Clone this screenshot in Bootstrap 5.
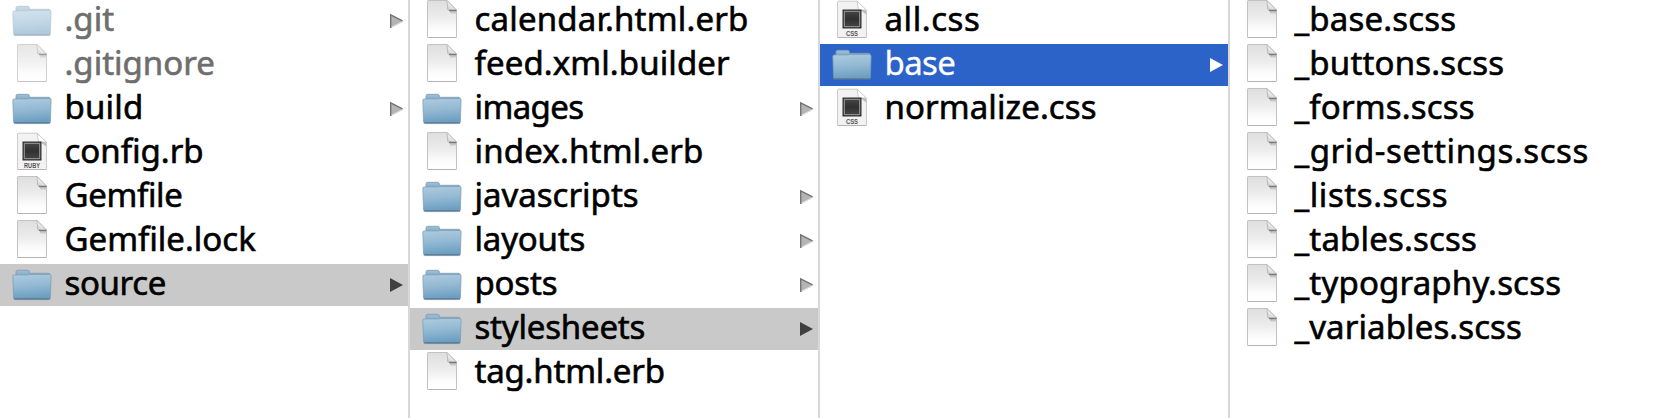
<!DOCTYPE html>
<html lang="en">
<head>
<meta charset="utf-8">
<title>Files</title>
<link href="https://cdn.jsdelivr.net/npm/bootstrap@5.3.0/dist/css/bootstrap.min.css" rel="stylesheet">
<style>
body{background:#fff;color:#000;font-family:"Noto Sans","Open Sans",sans-serif;font-size:33px;overflow:hidden}
.browser{height:418px}
.pane{width:410px;border-right:2px solid #d8d8d8}
.pane:last-child{width:424px;border-right:0}
.entry{height:42px;margin-bottom:2px;padding:0 4px 0 12px;line-height:38px;white-space:nowrap}
.entry .icon{width:40px;height:42px;flex:none;margin-right:12.500px}
.entry .arrow{width:14px;height:42px;flex:none;margin-left:auto}
.label{-webkit-text-stroke:.6px currentColor}
.dotfile .icon{opacity:.55}
.dotfile .icon.faint{opacity:.75}
.dotfile .label{color:#6e6e6e}
.open-path{background:#c9c9c9}
.open-path .arrow{color:#404040}
.selected{background:#2c63c9;color:#fff}
.selected .label{-webkit-text-stroke-width:.3px}
.tighter{letter-spacing:-.6px}
.tight{letter-spacing:-.35px}
.snug{letter-spacing:-.2px}
.even{letter-spacing:.1px}
.loose{letter-spacing:.18px}
.looser{letter-spacing:.58px}
.tag-text{font:bold 6.500px "Liberation Sans",sans-serif;fill:#555}
</style>
</head>
<body>
<svg width="0" height="0" class="position-absolute" aria-hidden="true">
<defs>
<linearGradient id="gFront" x1="0" y1="0" x2=".12" y2="1"><stop offset="0" stop-color="#adcbdf"/><stop offset=".5" stop-color="#93b9d3"/><stop offset="1" stop-color="#6c9ec2"/></linearGradient>
<linearGradient id="gBack" x1="0" y1="0" x2="0" y2="1"><stop offset="0" stop-color="#9fc0d6"/><stop offset="1" stop-color="#7ba7c4"/></linearGradient>
<linearGradient id="gDoc" x1="0" y1="0" x2="0" y2="1"><stop offset="0" stop-color="#dedede"/><stop offset=".45" stop-color="#ececec"/><stop offset=".8" stop-color="#fdfdfd"/><stop offset="1" stop-color="#fff"/></linearGradient>
<linearGradient id="gFold" x1=".65" y1=".25" x2=".25" y2=".9"><stop offset="0" stop-color="#fff"/><stop offset="1" stop-color="#d4d4d4"/></linearGradient>
<linearGradient id="gShade" x1="0" y1="0" x2="0" y2="1"><stop offset="0" stop-color="#777"/><stop offset="1" stop-color="#777" stop-opacity="0"/></linearGradient>
<linearGradient id="gChip" x1="0" y1="0" x2="0" y2="1"><stop offset="0" stop-color="#454545"/><stop offset=".5" stop-color="#303030"/><stop offset="1" stop-color="#444"/></linearGradient>
</defs>
<symbol id="folder" viewBox="0 0 40 42">
<path d="M4 11V8Q4 6.300 5.700 6.300H15.600Q17.300 6.300 17.400 8V9.300H37Q38 9.500 38.200 11V13H3Z" fill="url(#gBack)" stroke="#7c9bb0" stroke-width=".8"/>
<path d="M.8 12.300Q.8 10.900 2.200 10.900H15Q17 10.900 18.500 10.500H37.600Q39.200 10.600 39.100 12.200L38.400 33.500Q38.300 35 37 35H3Q1.600 35 1.500 33.500Z" fill="url(#gFront)" stroke="#789cb5" stroke-width=".7"/>
<path d="M1.800 34.800H38.200" stroke="#547894" stroke-width="1.200"/>
<path d="M3.500 35.700H36.500" stroke="#555" stroke-opacity=".35" stroke-width=".7"/>
</symbol>
<symbol id="page" viewBox="0 0 40 42">
<path d="M5.500 1.200Q5.500.5 6.200.5H25L34.500 10V36.800Q34.500 37.500 33.800 37.500H6.200Q5.500 37.500 5.500 36.800Z" fill="url(#gDoc)" stroke="#c2c2c2"/>
<path d="M27 10H34V14.500H29Z" fill="url(#gShade)" opacity=".65"/>
<path d="M25 .5L25.800 9.500Q26 10.200 27 10.200H34.500Z" fill="url(#gFold)" stroke="#aaa" stroke-width=".7"/>
<path d="M27 10.400H34.500" stroke="#777" stroke-width="1.200"/>
<path d="M5.500 37.500H34.500" stroke="#b5b5b5"/>
</symbol>
<symbol id="codepage" viewBox="0 0 40 42">
<path d="M5.500 1.900Q5.500 1.200 6.200 1.200H25L34.500 10.500V36.800Q34.500 37.500 33.800 37.500H6.200Q5.500 37.500 5.500 36.800Z" fill="#f2f2f2" stroke="#ccc"/>
<path d="M25 1.200L26.500 10H34.500Z" fill="#fff" stroke="#bbb" stroke-width=".7"/>
<path d="M28 9.800L34 10.500V14.500Z" fill="#999" opacity=".6"/>
<path d="M10.500 9.500H29.500V28.500H10.500Z" fill="#303030"/>
<path d="M12.300 11.300H27.700V26.700H12.300Z" fill="url(#gChip)" stroke="#a9a9a9" stroke-width=".9"/>
<path d="M5.500 37.500H34.500" stroke="#b5b5b5"/>
</symbol>
<symbol id="arrow" viewBox="0 0 14 42"><path d="M0 14V28L13 21Z" fill="#b4b4b4"/><path d="M1 27.500L13 21.200" stroke="#d7d7d7" stroke-width="1.200"/><path d="M.7 28V14.800L12.500 20.900" fill="none" stroke="#747474" stroke-width="1.400"/></symbol>
<symbol id="arrow-solid" viewBox="0 0 14 42"><path d="M0 14V28L13 21Z" fill="currentColor"/></symbol>
</svg>
<main class="browser d-flex">
<section class="pane flex-shrink-0">
<div class="entry d-flex dotfile"><svg class="icon"><use href="#folder"/></svg><span class="label">.git</span><svg class="arrow"><use href="#arrow"/></svg></div>
<div class="entry d-flex dotfile"><svg class="icon faint"><use href="#page"/></svg><span class="label">.gitignore</span></div>
<div class="entry d-flex"><svg class="icon"><use href="#folder"/></svg><span class="label loose">build</span><svg class="arrow"><use href="#arrow"/></svg></div>
<div class="entry d-flex"><svg class="icon"><use href="#codepage"/><text class="tag-text" x="12" y="35.500" textLength="16" lengthAdjust="spacingAndGlyphs">RUBY</text></svg><span class="label">config.rb</span></div>
<div class="entry d-flex"><svg class="icon"><use href="#page"/></svg><span class="label tight">Gemfile</span></div>
<div class="entry d-flex"><svg class="icon"><use href="#page"/></svg><span class="label">Gemfile.lock</span></div>
<div class="entry d-flex open-path"><svg class="icon"><use href="#folder"/></svg><span class="label tight">source</span><svg class="arrow"><use href="#arrow-solid"/></svg></div>
</section>
<section class="pane flex-shrink-0">
<div class="entry d-flex"><svg class="icon"><use href="#page"/></svg><span class="label loose">calendar.html.erb</span></div>
<div class="entry d-flex"><svg class="icon"><use href="#page"/></svg><span class="label even">feed.xml.builder</span></div>
<div class="entry d-flex"><svg class="icon"><use href="#folder"/></svg><span class="label tighter">images</span><svg class="arrow"><use href="#arrow"/></svg></div>
<div class="entry d-flex"><svg class="icon"><use href="#page"/></svg><span class="label loose">index.html.erb</span></div>
<div class="entry d-flex"><svg class="icon"><use href="#folder"/></svg><span class="label">javascripts</span><svg class="arrow"><use href="#arrow"/></svg></div>
<div class="entry d-flex"><svg class="icon"><use href="#folder"/></svg><span class="label snug">layouts</span><svg class="arrow"><use href="#arrow"/></svg></div>
<div class="entry d-flex"><svg class="icon"><use href="#folder"/></svg><span class="label snug">posts</span><svg class="arrow"><use href="#arrow"/></svg></div>
<div class="entry d-flex open-path"><svg class="icon"><use href="#folder"/></svg><span class="label snug">stylesheets</span><svg class="arrow"><use href="#arrow-solid"/></svg></div>
<div class="entry d-flex"><svg class="icon"><use href="#page"/></svg><span class="label snug">tag.html.erb</span></div>
</section>
<section class="pane flex-shrink-0">
<div class="entry d-flex"><svg class="icon"><use href="#codepage"/><text class="tag-text" x="14" y="35.500" textLength="12" lengthAdjust="spacingAndGlyphs">CSS</text></svg><span class="label looser">all.css</span></div>
<div class="entry d-flex selected"><svg class="icon"><use href="#folder"/></svg><span class="label tighter">base</span><svg class="arrow"><use href="#arrow-solid"/></svg></div>
<div class="entry d-flex"><svg class="icon"><use href="#codepage"/><text class="tag-text" x="14" y="35.500" textLength="12" lengthAdjust="spacingAndGlyphs">CSS</text></svg><span class="label even">normalize.css</span></div>
</section>
<section class="pane flex-shrink-0">
<div class="entry d-flex"><svg class="icon"><use href="#page"/></svg><span class="label loose">_base.scss</span></div>
<div class="entry d-flex"><svg class="icon"><use href="#page"/></svg><span class="label loose">_buttons.scss</span></div>
<div class="entry d-flex"><svg class="icon"><use href="#page"/></svg><span class="label loose">_forms.scss</span></div>
<div class="entry d-flex"><svg class="icon"><use href="#page"/></svg><span class="label looser">_grid-settings.scss</span></div>
<div class="entry d-flex"><svg class="icon"><use href="#page"/></svg><span class="label looser">_lists.scss</span></div>
<div class="entry d-flex"><svg class="icon"><use href="#page"/></svg><span class="label loose">_tables.scss</span></div>
<div class="entry d-flex"><svg class="icon"><use href="#page"/></svg><span class="label loose">_typography.scss</span></div>
<div class="entry d-flex"><svg class="icon"><use href="#page"/></svg><span class="label even">_variables.scss</span></div>
</section>
</main>
<script src="https://cdn.jsdelivr.net/npm/bootstrap@5.3.0/dist/js/bootstrap.bundle.min.js"></script>
</body>
</html>
